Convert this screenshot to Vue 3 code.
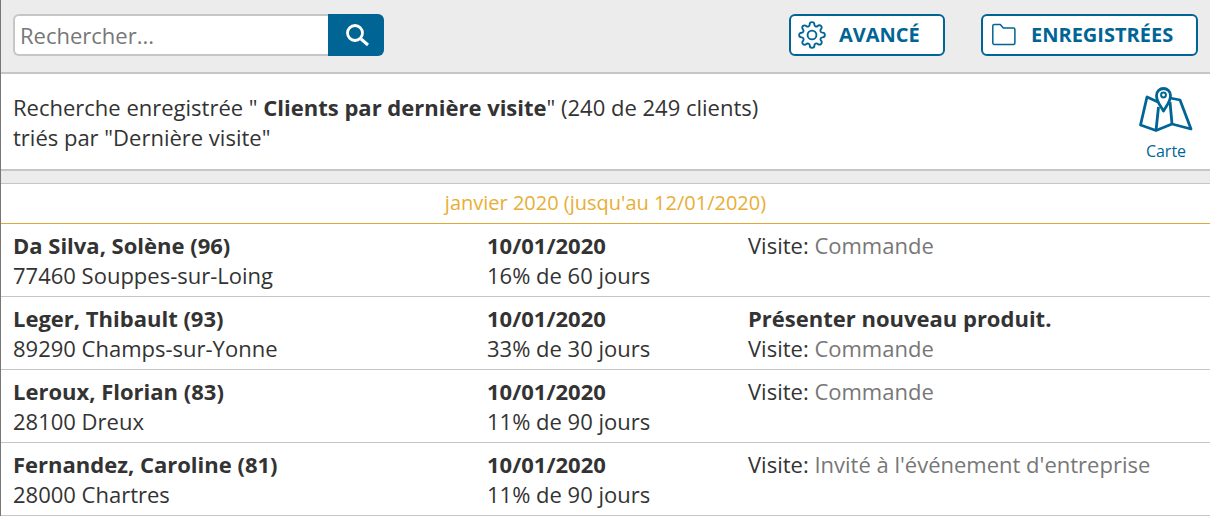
<template>
  <div class="page">
    <header class="toolbar">
      <form class="search" @submit.prevent>
        <input class="search-input" type="text" placeholder="Rechercher..." />
        <button class="search-btn" type="button" aria-label="Rechercher">
          <svg width="26" height="26" viewBox="0 0 26 26" fill="none" stroke="#fff">
            <circle cx="12" cy="11" r="7.500" stroke-width="2.800" />
            <path d="M18 17l7 6" stroke-width="3" />
          </svg>
        </button>
      </form>
      <button class="tool-btn btn-advanced" type="button">
        <svg class="btn-icon" width="28" height="28" viewBox="0 0 24 24" fill="none" stroke="#006595" stroke-width="1.600" stroke-linejoin="round">
          <circle cx="12" cy="12" r="3.800" />
          <path d="M19.400 15a1.650 1.650 0 0 0 .33 1.820l.06.06a2 2 0 0 1 0 2.830 2 2 0 0 1-2.830 0l-.06-.06a1.650 1.650 0 0 0-1.820-.33 1.650 1.650 0 0 0-1 1.510V21a2 2 0 0 1-2 2 2 2 0 0 1-2-2v-.09A1.650 1.650 0 0 0 9 19.400a1.650 1.650 0 0 0-1.820.33l-.06.06a2 2 0 0 1-2.830 0 2 2 0 0 1 0-2.830l.06-.06a1.650 1.650 0 0 0 .33-1.820 1.650 1.650 0 0 0-1.510-1H3a2 2 0 0 1-2-2 2 2 0 0 1 2-2h.09A1.650 1.650 0 0 0 4.600 9a1.650 1.650 0 0 0-.33-1.820l-.06-.06a2 2 0 0 1 0-2.830 2 2 0 0 1 2.830 0l.06.06a1.650 1.650 0 0 0 1.820.33H9a1.650 1.650 0 0 0 1-1.510V3a2 2 0 0 1 2-2 2 2 0 0 1 2 2v.09a1.650 1.650 0 0 0 1 1.510 1.650 1.650 0 0 0 1.820-.33l.06-.06a2 2 0 0 1 2.830 0 2 2 0 0 1 0 2.830l-.06.06a1.650 1.650 0 0 0-.33 1.820V9a1.650 1.650 0 0 0 1.510 1H21a2 2 0 0 1 2 2 2 2 0 0 1-2 2h-.09a1.650 1.650 0 0 0-1.510 1z" />
        </svg>
        <span class="btn-label">AVANCÉ</span>
      </button>
      <button class="tool-btn btn-saved" type="button">
        <svg class="btn-icon" width="26" height="26" viewBox="0 0 26 26" fill="none" stroke="#006595" stroke-width="1.500" stroke-linejoin="round">
          <path d="M1.800 4a1.500 1.500 0 0 1 1.500-1.500h6l3 3.500h10.100a1.500 1.500 0 0 1 1.500 1.500v13.500a1.500 1.500 0 0 1-1.500 1.500h-19.100a1.500 1.500 0 0 1-1.500-1.500z" />
        </svg>
        <span class="btn-label">ENREGISTRÉES</span>
      </button>
    </header>

    <section class="summary">
      <p class="summary-text">
        Recherche enregistrée " <b>Clients par dernière visite</b>" (240 de 249 clients)<br />
        triés par "Dernière visite"
      </p>
      <a class="map-link" href="#">
        <svg width="54" height="48" viewBox="0 0 54 48" fill="none" stroke="#006595" stroke-width="2.800" stroke-linejoin="round">
          <path d="M19 17L8 12 1.500 40 17 45.500 33 39l19 5-11-29-10-2" />
          <path d="M19.500 22L17 45.500M31 17l2 22" />
          <path d="M24.500 26c-3-5.500-7-9-7-15.500a7 7 0 0 1 14 0c0 6.500-4 10-7 15.500z" />
          <circle cx="24.500" cy="10" r="2.400" stroke-width="2" />
        </svg>
        <span>Carte</span>
      </a>
    </section>

    <div class="band"></div>

    <div class="group-title">janvier 2020 (jusqu'au 12/01/2020)</div>

    <article v-for="client in clients" :key="client.name" class="row">
      <div class="col-name">
        <div class="strong">{{ client.name }}</div>
        <div>{{ client.city }}</div>
      </div>
      <div class="col-date">
        <div class="strong">{{ client.date }}</div>
        <div>{{ client.progress }}</div>
      </div>
      <div class="col-note">
        <div v-if="client.task" class="strong">{{ client.task }}</div>
        <div>Visite: <span class="muted">{{ client.visit }}</span></div>
      </div>
    </article>
  </div>
</template>

<script setup>
const clients = [
  { name: 'Da Silva, Solène (96)', city: '77460 Souppes-sur-Loing', date: '10/01/2020', progress: '16% de 60 jours', visit: 'Commande' },
  { name: 'Leger, Thibault (93)', city: '89290 Champs-sur-Yonne', date: '10/01/2020', progress: '33% de 30 jours', task: 'Présenter nouveau produit.', visit: 'Commande' },
  { name: 'Leroux, Florian (83)', city: '28100 Dreux', date: '10/01/2020', progress: '11% de 90 jours', visit: 'Commande' },
  { name: 'Fernandez, Caroline (81)', city: '28000 Chartres', date: '10/01/2020', progress: '11% de 90 jours', visit: "Invité à l'événement d'entreprise" }
];
</script>

<style>
html, body {
  margin: 0;
  background: #fff;
}
</style>

<style scoped>
.page {
  height: 516px;
  overflow: hidden;
  box-sizing: border-box;
  border-left: 1px solid #777;
  font-family: "Open Sans", sans-serif;
  font-size: 22px;
  line-height: 30px;
  color: #333;
}

.toolbar {
  display: flex;
  align-items: center;
  box-sizing: border-box;
  height: 74px;
  padding: 0 12px 2px 12px;
  background: #ececec;
  border-bottom: 2px solid #c4c6c8;
}

.search {
  display: flex;
  margin: 0;
}

.search-input {
  box-sizing: border-box;
  width: 315px;
  height: 42px;
  padding: 0 5px;
  border: 2px solid #c4c6c8;
  border-right: 0;
  border-radius: 6px 0 0 6px;
  background: #fff;
  font: 22px "Open Sans", sans-serif;
  color: #333;
  outline: none;
}

.search-input::placeholder {
  color: #777;
  opacity: 1;
}

.search-btn {
  display: flex;
  align-items: center;
  justify-content: center;
  width: 56px;
  height: 42px;
  padding: 0;
  border: 0;
  border-radius: 0 6px 6px 0;
  background: #006595;
}

.tool-btn {
  display: flex;
  align-items: center;
  box-sizing: border-box;
  height: 42px;
  padding: 0;
  border: 2px solid #006595;
  border-radius: 6px;
  background: #fff;
  font: 700 20px "Open Sans", sans-serif;
  color: #006595;
}

.btn-label {
  padding-bottom: 2px;
}

.btn-advanced {
  width: 156px;
  margin-left: auto;
  padding-left: 7px;
  gap: 13px;
}

.btn-saved {
  width: 217px;
  margin-left: 36px;
  padding-left: 8px;
  gap: 14px;
}

.summary {
  display: flex;
  justify-content: space-between;
  box-sizing: border-box;
  height: 95px;
  padding: 18px 17px 0 12px;
}

.summary-text {
  margin: 0;
}

.summary-text b {
  font-weight: 700;
}

.map-link {
  display: flex;
  flex-direction: column;
  align-items: center;
  gap: 8px;
  margin-top: -7px;
  font-size: 16px;
  line-height: 20px;
  color: #006595;
  text-decoration: none;
}

.band {
  box-sizing: border-box;
  height: 15px;
  background: #ececec;
  border-top: 2px solid #c4c6c8;
  border-bottom: 1px solid #c4c6c8;
}

.group-title {
  box-sizing: border-box;
  height: 40px;
  border-bottom: 1px solid #dfa93a;
  text-align: center;
  font-size: 20px;
  line-height: 37px;
  color: #e8ae35;
}

.row {
  display: grid;
  grid-template-columns: 474px 261px 1fr;
  box-sizing: border-box;
  height: 73px;
  padding: 6px 12px 0 12px;
  border-bottom: 1px solid #c4c6c8;
}

.strong {
  font-weight: 700;
}

.muted {
  color: #777;
}
</style>
